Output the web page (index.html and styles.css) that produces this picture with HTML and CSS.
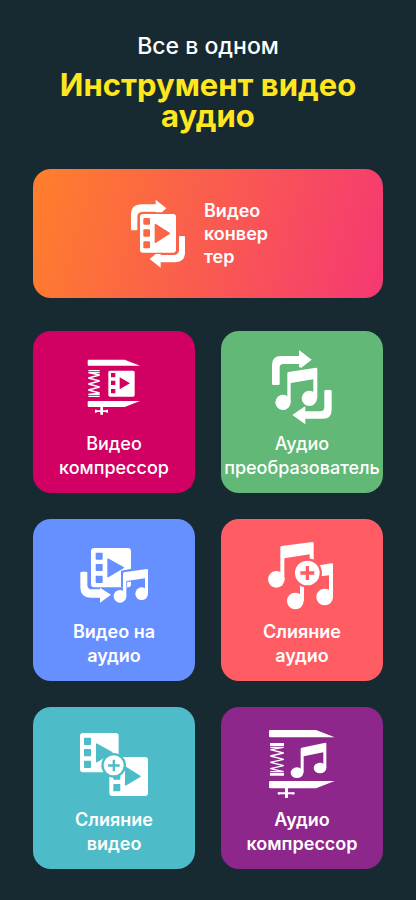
FILE: index.html
```html
<!DOCTYPE html>
<html lang="ru">
<head>
<meta charset="utf-8">
<meta name="viewport" content="width=device-width, initial-scale=1">
<title>Инструмент видео аудио</title>
<link rel="stylesheet" href="styles.css">
</head>
<body>
<main class="page">
  <header class="heading">
    <p class="subtitle">Все в одном</p>
    <h1 class="title">Инструмент видео аудио</h1>
  </header>

  <button class="card hero" type="button">
    <svg class="hero-icon" viewBox="30 29 168 207" aria-hidden="true">
      <path d="M36 123q-3 0-3-3V75q0-30 31-30h43V31l32 26-13 12h-19v-2H70q-18 0-18 14v39q0 3-3 3z"/>
      <path fill-rule="evenodd" d="M69 74h90q9 0 9 9v98q0 9-9 9H69q-9 0-9-9V83q0-9 9-9zM73 86q-3 0-3 3v14q0 3 3 3h14q3 0 3-3V89q0-3-3-3zM73 120q-3 0-3 3v16q0 3 3 3h14q3 0 3-3v-16q0-3-3-3zM73 156q-3 0-3 3v15q0 3 3 3h14q3 0 3-3v-15q0-3-3-3zM104 106v52q0 4 4 2l41-26q3-2 0-4l-41-26q-4-2-4 2z"/>
      <path d="M181 140h11q3 0 3 3v46q0 30-31 30h-42v16L89 209l18-15h15v3h37q18 0 18-14v-40q0-3 4-3z"/>
    </svg>
    <span class="label">Видео<br>конвер<br>тер</span>
  </button>

  <div class="grid">
    <button class="card pink" type="button">
      <svg class="icon" viewBox="-3 -12 270 270" aria-hidden="true">
        <path d="M56 44h108l46 18H56q-3 0-3-3V47q0-3 3-3zM56 168h154l-46 18H56q-3 0-3-3v-12q0-3 3-3z"/>
        <path d="M91 186h8v23h-8zM76 196h37v5H76zM75 194h5v9h-5zM109 194h5v9h-5z"/>
        <path class="line" d="M55 77h34M55 83h34M55 83l34 7-34 9 34 9-34 9 34 9-34 9 34 9-34 4h34M55 154h34"/>
        <rect x="115" y="77" width="79" height="78" rx="5"/>
        <path class="cut" d="M123 84h13v13h-13zM123 107h13v13h-13zM123 132h13v13h-13zM149 97l31 18-31 18z"/>
      </svg>
      <span class="label">Видео<br>компрессор</span>
    </button>

    <button class="card green" type="button">
      <svg class="icon" viewBox="6 3 270 270" aria-hidden="true">
        <path d="M55 135q-4 0-4-4V75q0-27 27-27h54V30l38 29-31 24-7-2v-9H85q-11 0-11 11v48q0 4-4 4z"/>
        <path d="M212 150h14q4 0 4 4v55q0 27-27 27h-52v17l-39-28 39-27v16h44q13 0 13-12v-48q0-4 4-4z"/>
        <circle class="outline" cx="163" cy="175" r="22"/>
        <path d="M97 100q0-3 3-4l83-13q4 0 4 4v88h-12v-57l-68 11v58H97z"/>
        <circle cx="84" cy="187" r="23"/><circle cx="163" cy="175" r="23"/>
      </svg>
      <span class="label">Аудио<br>преобразователь</span>
    </button>

    <button class="card blue" type="button">
      <svg class="icon" viewBox="-3 -18 270 270" aria-hidden="true">
        <rect x="63" y="39" width="120" height="118" rx="10"/>
        <path class="cut round" d="M79 55h17v17H79zM79 89h17v17H79zM79 124h17v18H79zM114 72v53l46-27z"/>
        <path d="M35 110h13q4 0 4 4v35q0 14 14 14h24v-5l33 21-33 24v-15H62q-31 0-31-31v-43q0-4 4-4z"/>
        <path class="cut" d="M153 107l32-6v39h-13v17h-19z"/>
        <circle class="outline" cx="150" cy="184" r="18"/>
        <path d="M172 143l11-2v5q0 9-11 11z"/>
        <path d="M159 116q0-3 3-4l69-10q3 0 3 3v71h-9v-46l-56 8v46h-10z"/>
        <circle cx="150" cy="184" r="19"/><circle cx="215" cy="176" r="19"/>
      </svg>
      <span class="label">Видео на<br>аудио</span>
    </button>

    <button class="card red" type="button">
      <svg class="icon" viewBox="6 -3 270 270" aria-hidden="true">
        <path d="M76 52q0-3 4-4l92-12q4 0 4 4v60h-12V73l-76 12v63H76z"/>
        <circle cx="64" cy="148" r="25"/>
        <path d="M135 160h12v53h-12zM180 108l50-8q4 0 4 4v97h-12v-65l-42 5z"/>
        <circle cx="121" cy="213" r="25"/><circle cx="209" cy="201" r="25"/>
        <circle class="cut" cx="157" cy="129" r="44"/>
        <circle cx="157" cy="129" r="37"/>
        <path class="cut" d="M152 108h10v16h16v10h-16v16h-10v-16h-16v-10h16z"/>
      </svg>
      <span class="label">Слияние<br>аудио</span>
    </button>

    <button class="card teal" type="button">
      <svg class="icon" viewBox="-3 -9 270 270" aria-hidden="true">
        <rect x="30" y="39" width="116" height="118" rx="9"/>
        <path class="cut round" d="M44 55h17v18H44zM44 89h17v18H44zM44 124h17v18H44zM80 72v53l46-27z"/>
        <rect x="118" y="111" width="116" height="117" rx="9"/>
        <path class="cut round" d="M132 126h17v17h-17zM132 160h17v17h-17zM132 194h17v18h-17zM167 142v53l43-26z"/>
        <circle class="cut" cx="131" cy="136" r="37"/>
        <circle cx="131" cy="136" r="30"/>
        <path class="cut" d="M128 119h7v14h14v7h-14v14h-7v-14h-14v-7h14z"/>
      </svg>
      <span class="label">Слияние<br>видео</span>
    </button>

    <button class="card purple" type="button">
      <svg class="icon" viewBox="6 -9 270 270" aria-hidden="true">
        <path d="M46 30h137l56 22H46q-4 0-4-4V34q0-4 4-4zM46 183h193l-56 22H46q-4 0-4-4v-14q0-4 4-4z"/>
        <path d="M90 204h9v30h-9zM72 217h43v6H72z"/><circle cx="72" cy="220" r="4"/><circle cx="115" cy="220" r="4"/>
        <path d="M45 69h42v9H45zM45 159h42v8H45z"/>
        <path class="line" d="M46 82h40M86 82l-40 7 40 10-40 9 40 10-40 9 40 10-40 9 40 9M46 155h40"/>
        <path d="M137 87q0-3 3-4l71-15q3 0 3 3v73h-9V97l-59 12v49h-9z"/>
        <ellipse cx="126" cy="158" rx="19" ry="16"/><ellipse cx="195" cy="144" rx="19" ry="16"/>
      </svg>
      <span class="label">Аудио<br>компрессор</span>
    </button>
  </div>
</main>
</body>
</html>
```
FILE: styles.css
```css
* {
  box-sizing: border-box;
}

body {
  margin: 0;
  background: #182a31;
  color: #fff;
  font-family: Inter, "Liberation Sans", sans-serif;
}

.page {
  padding: 29px 33px 30px;
}

.heading {
  margin-bottom: 38px;
  text-align: center;
}

.subtitle {
  margin: 0 0 6px;
  font-size: 23px;
  font-weight: 500;
  line-height: 34px;
}

.title {
  margin: 0;
  color: #ffe71f;
  font-size: 31px;
  font-weight: 700;
  line-height: 31px;
}

.card {
  display: flex;
  align-items: center;
  padding: 0;
  border: 0;
  border-radius: 18px;
  color: #fff;
  font-family: inherit;
  font-size: 18px;
  font-weight: 600;
  line-height: 24px;
  cursor: pointer;
}

.card svg {
  flex: none;
  fill: #fff;
}

.hero {
  width: 100%;
  min-height: 129px;
  margin-bottom: 33px;
  justify-content: center;
  gap: 18px;
  background: linear-gradient(105deg, #ff7f2b, #f53873);
  line-height: 23px;
  text-align: left;
}

.hero-icon {
  width: 56px;
  height: 69px;
}

.hero .label {
  width: 82px;
}

.grid {
  display: grid;
  grid-template-columns: 1fr 1fr;
  gap: 26px;
}

.grid .card {
  --tile: #d10062;
  flex-direction: column;
  gap: 1px;
  min-width: 0;
  aspect-ratio: 1;
  padding-top: 10px;
  background: var(--tile);
  text-align: center;
}

.grid .pink,
.grid .green {
  font-weight: 500;
}

.grid .green { --tile: #62b876; }
.grid .blue { --tile: #6690ff; }
.grid .red { --tile: #ff5d63; }
.grid .teal { --tile: #4dbcc8; }
.grid .purple { --tile: #8e278b; }

.icon {
  width: 90px;
  height: 90px;
}

.icon .cut {
  fill: var(--tile);
}

.icon .round {
  stroke: var(--tile);
  stroke-width: 4;
  stroke-linejoin: round;
}

.icon .outline {
  fill: var(--tile);
  stroke: var(--tile);
  stroke-width: 12;
}

.icon .line {
  fill: none;
  stroke: #fff;
  stroke-width: 4;
  stroke-linejoin: bevel;
}
```
